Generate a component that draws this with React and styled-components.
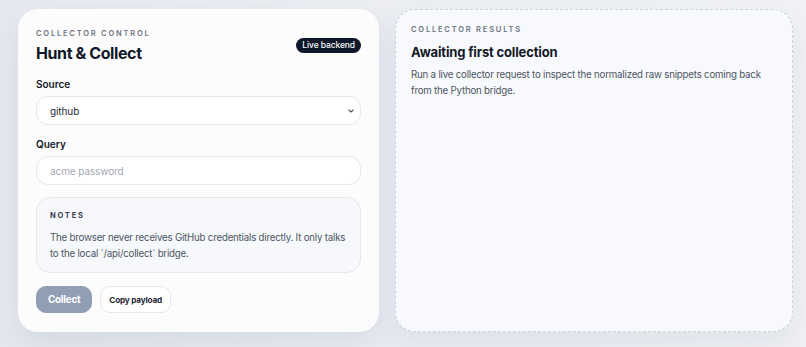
import React from "react";
import styled, { createGlobalStyle } from "styled-components";

const Global = createGlobalStyle`
  html, body { margin: 0; padding: 0; }
  body {
    width: 806px;
    height: 347px;
    overflow: hidden;
    font-family: "Inter", "Noto Sans", sans-serif;
    background: linear-gradient(90deg, #e6e9ef 0%, #eceef3 45%, #f1f2f5 100%);
    color: #111827;
  }
`;

const Page = styled.div`
  display: grid;
  grid-template-columns: 361fr 398fr;
  align-items: start;
  gap: 16px;
  padding: 9px 13px 0 18px;
`;

const Card = styled.section`
  background: #fcfcfd;
  border-radius: 20px;
  padding: 19px 18px 19px 18px;
  box-shadow: 0 14px 30px rgba(148, 160, 184, 0.22);
  display: flex;
  flex-direction: column;
`;

const ResultsCard = styled.section`
  align-self: stretch;
  background: #f8f9fc;
  border: 1px dashed #cdd3de;
  border-radius: 20px;
  padding: 14px 15px;
  box-shadow: 0 14px 30px rgba(148, 160, 184, 0.18);
`;

const Eyebrow = styled.div`
  font-size: 7.5px;
  font-weight: 600;
  letter-spacing: 1.8px;
  text-transform: uppercase;
  color: #6b7280;
  line-height: 12px;
`;

const HeaderRow = styled.div`
  display: flex;
  justify-content: space-between;
  align-items: flex-end;
`;

const Title = styled.h1`
  margin: 2px 0 0 0;
  font-size: 16px;
  letter-spacing: -0.4px;
  font-weight: 700;
  line-height: 22px;
  color: #111827;
`;

const Badge = styled.span`
  background: #0f172a;
  color: #f8fafc;
  font-size: 8.5px;
  letter-spacing: -0.1px;
  font-weight: 500;
  border-radius: 999px;
  padding: 2px 6px;
  line-height: 11px;
  margin-bottom: 11px;
`;

const Field = styled.div`
  display: flex;
  flex-direction: column;
  gap: 5px;
  margin-top: ${(p) => p.$mt}px;
`;

const Label = styled.label`
  font-size: 10px;
  font-weight: 600;
  color: #111827;
  line-height: 13px;
`;

const Control = styled.div`
  height: 29px;
  box-sizing: border-box;
  border: 1px solid #e5e7eb;
  border-radius: 12px;
  background: #ffffff;
  display: flex;
  align-items: center;
  justify-content: space-between;
  padding: 0 4px 0 13px;
  font-size: 10px;
  letter-spacing: -0.1px;
  color: ${(p) => (p.$placeholder ? "#a3a8b3" : "#1f2937")};
`;

const Notes = styled.div`
  margin-top: 12px;
  border: 1px solid #e5e7eb;
  background: #f7f8fb;
  border-radius: 14px;
  padding: 12px 12px 11px 13px;
`;

const NotesTitle = styled.div`
  font-size: 7.5px;
  font-weight: 700;
  letter-spacing: 1.8px;
  color: #374151;
  line-height: 12px;
`;

const Body = styled.p`
  margin: ${(p) => p.$mt || 0}px 0 0 0;
  font-size: 9.7px;
  letter-spacing: -0.2px;
  line-height: 15.5px;
  color: #4b5563;
`;

const Actions = styled.div`
  display: flex;
  gap: 8px;
  margin-top: 13px;
`;

const Button = styled.button`
  font-family: inherit;
  height: 27px;
  border-radius: 10px;
  font-weight: 700;
  letter-spacing: -0.2px;
  padding: 0 ${(p) => (p.$primary ? 11 : 8)}px;
  font-size: ${(p) => (p.$primary ? 9.8 : 8.2)}px;
  background: ${(p) => (p.$primary ? "#919fb4" : "#ffffff")};
  color: ${(p) => (p.$primary ? "#ffffff" : "#1f2937")};
  border: 1px solid ${(p) => (p.$primary ? "#919fb4" : "#e5e7eb")};
`;

const ResultsTitle = styled.h2`
  margin: 7px 0 0 0;
  font-size: 13px;
  letter-spacing: -0.15px;
  font-weight: 700;
  line-height: 18px;
  color: #111827;
`;

const Chevron = () => (
  <svg width="10" height="10" viewBox="0 0 10 10" fill="none">
    <path d="M2.8 4 L5 6 L7.2 4" stroke="#4b5563" strokeWidth="1.1" strokeLinecap="round" strokeLinejoin="round" />
  </svg>
);

export default function App() {
  return (
    <>
      <Global />
      <Page>
        <Card>
          <HeaderRow>
            <div>
              <Eyebrow>Collector Control</Eyebrow>
              <Title>Hunt &amp; Collect</Title>
            </div>
            <Badge>Live backend</Badge>
          </HeaderRow>
          <Field $mt={14}>
            <Label>Source</Label>
            <Control>
              <span>github</span>
              <Chevron />
            </Control>
          </Field>
          <Field $mt={13}>
            <Label>Query</Label>
            <Control $placeholder>acme password</Control>
          </Field>
          <Notes>
            <NotesTitle>NOTES</NotesTitle>
            <Body $mt={8}>
              The browser never receives GitHub credentials directly. It only talks to the local `/api/collect` bridge.
            </Body>
          </Notes>
          <Actions>
            <Button $primary>Collect</Button>
            <Button>Copy payload</Button>
          </Actions>
        </Card>
        <ResultsCard>
          <Eyebrow>Collector Results</Eyebrow>
          <ResultsTitle>Awaiting first collection</ResultsTitle>
          <Body $mt={6}>
            Run a live collector request to inspect the normalized raw snippets coming back from the Python bridge.
          </Body>
        </ResultsCard>
      </Page>
    </>
  );
}
